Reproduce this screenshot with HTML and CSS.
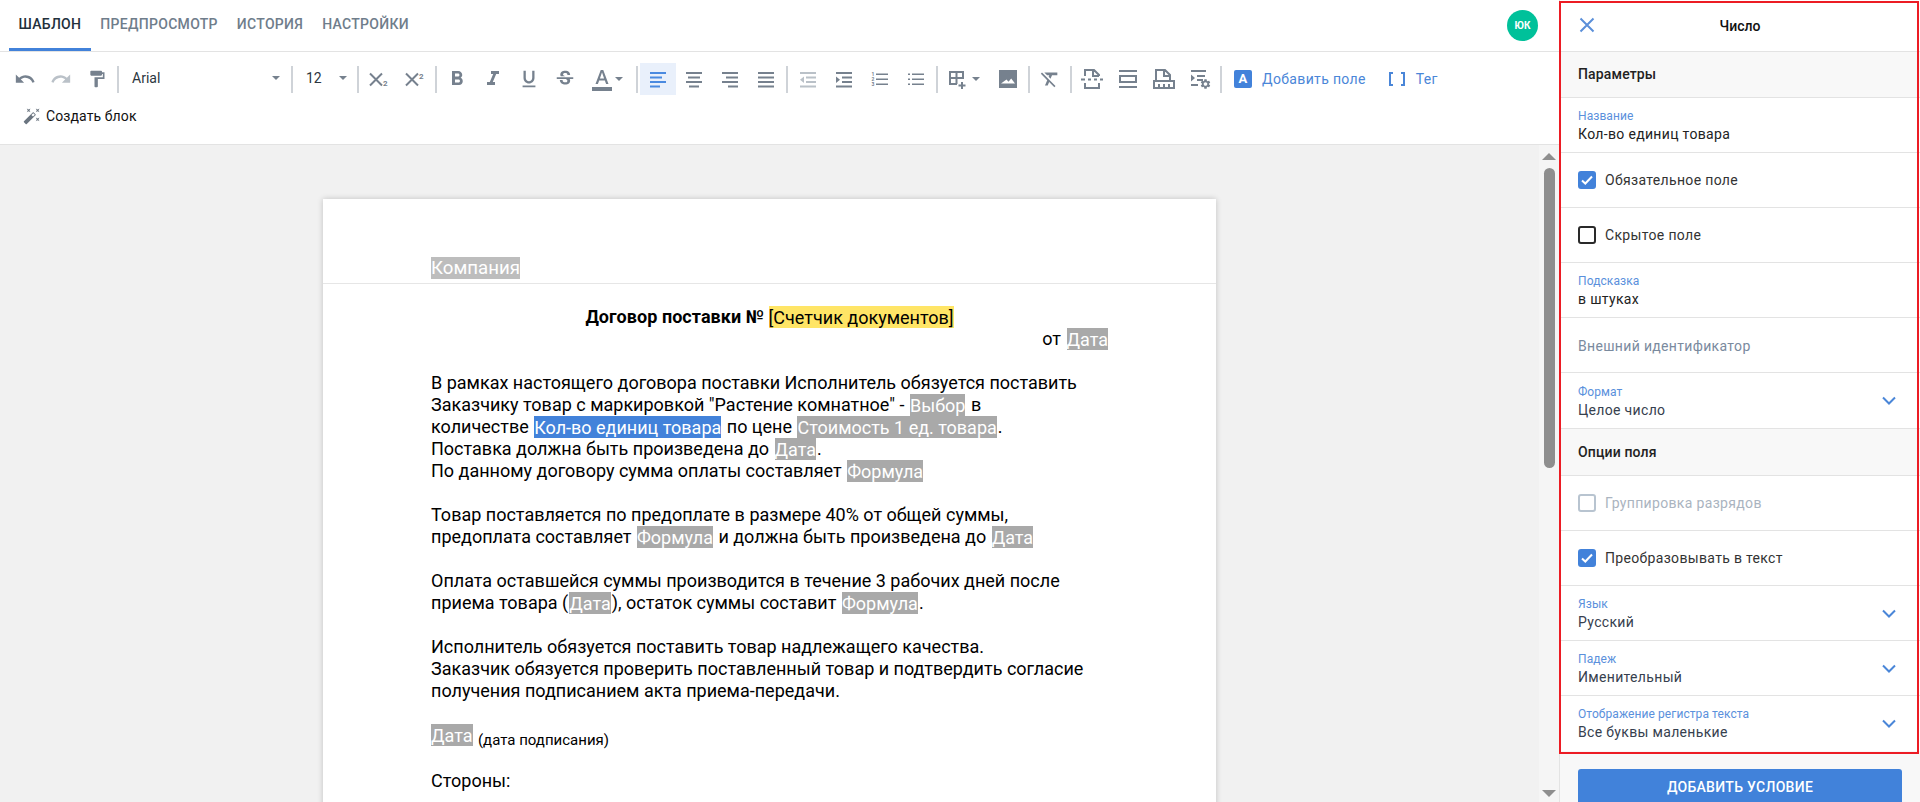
FILE: index.html
```html
<!DOCTYPE html>
<html lang="ru">
<head>
  <meta charset="UTF-8">
  <meta name="viewport" content="width=device-width, initial-scale=1.0">
  <title>Шаблон - Договор поставки</title>
  <link rel="stylesheet" href="styles.css">
</head>
<body>
  <div class="app">
    <div class="main">
      <!-- Tabs -->
      <div class="topbar">
        <div class="tabs">
          <a class="tab active">Шаблон</a>
          <a class="tab">Предпросмотр</a>
          <a class="tab">История</a>
          <a class="tab">Настройки</a>
        </div>
        <div class="avatar">ЮК</div>
      </div>

      <!-- Toolbar -->
      <div class="toolbar">
        <div class="tb-row">
          <button class="tb-btn"><svg class="ic22" viewBox="0 0 24 24"><path d="M12.5 8c-2.65 0-5.05.99-6.9 2.6L2 7v9h9l-3.62-3.62c1.39-1.16 3.16-1.88 5.12-1.88 3.54 0 6.55 2.31 7.6 5.5l2.37-.78C21.08 11.03 17.15 8 12.5 8z"/></svg></button>
          <button class="tb-btn faded"><svg class="ic22" viewBox="0 0 24 24"><path d="M18.4 10.6C16.55 8.99 14.15 8 11.5 8c-4.65 0-8.58 3.03-9.96 7.22L3.9 16c1.05-3.19 4.05-5.5 7.6-5.5 1.95 0 3.73.72 5.12 1.88L13 16h9V7l-3.6 3.6z"/></svg></button>
          <button class="tb-btn"><svg class="ic20" viewBox="0 0 24 24"><path d="M18 4V3c0-.55-.45-1-1-1H5c-.55 0-1 .45-1 1v4c0 .55.45 1 1 1h12c.55 0 1-.45 1-1V6h1v4H9v11c0 .55.45 1 1 1h2c.55 0 1-.45 1-1v-9h8V4h-3z"/></svg></button>
          <span class="tb-sep"></span>
          <div class="tb-select font-select"><span>Arial</span><i class="caret"></i></div>
          <span class="tb-sep"></span>
          <div class="tb-select size-select"><span>12</span><i class="caret"></i></div>
          <span class="tb-sep"></span>
          <button class="tb-btn"><svg class="ic24" viewBox="0 0 24 24"><path class="st2" d="M3 6.500l12 12M15 6.500l-12 12"/><text class="mini" x="16" y="18.500">2</text></svg></button>
          <button class="tb-btn"><svg class="ic24" viewBox="0 0 24 24"><path class="st2" d="M3 6.500l12 12M15 6.500l-12 12"/><text class="mini" x="16" y="12">2</text></svg></button>
          <span class="tb-sep"></span>
          <button class="tb-btn"><svg class="ic24" viewBox="0 0 24 24"><path d="M15.6 10.79c.97-.67 1.65-1.77 1.65-2.79 0-2.26-1.75-4-4-4H7v14h7.04c2.09 0 3.71-1.7 3.71-3.79 0-1.52-.86-2.82-2.15-3.42zM10 6.5h3c.83 0 1.5.67 1.5 1.5s-.67 1.5-1.5 1.5h-3v-3zm3.5 9H10v-3h3.5c.83 0 1.5.67 1.5 1.5s-.67 1.5-1.5 1.5z"/></svg></button>
          <button class="tb-btn"><svg class="ic24" viewBox="0 0 24 24"><path d="M10 4v3h2.21l-3.42 8H6v3h8v-3h-2.21l3.42-8H18V4z"/></svg></button>
          <button class="tb-btn"><svg class="ic22" viewBox="0 0 24 24"><path d="M12 17c3.31 0 6-2.69 6-6V3h-2.5v8c0 1.93-1.57 3.5-3.5 3.5S8.5 12.93 8.5 11V3H6v8c0 3.31 2.69 6 6 6zm-7 2v2h14v-2H5z"/></svg></button>
          <button class="tb-btn"><svg class="ic22" viewBox="0 0 24 24"><path d="M7.24 8.75c-.26-.48-.39-1.03-.39-1.67 0-.61.13-1.16.4-1.67.26-.5.63-.93 1.11-1.29.48-.35 1.05-.63 1.7-.83.66-.19 1.39-.29 2.18-.29.81 0 1.54.11 2.21.34.66.22 1.23.54 1.69.94.47.4.83.88 1.08 1.43.25.55.38 1.15.38 1.81h-3.01c0-.31-.05-.59-.15-.85-.09-.27-.24-.49-.44-.68-.2-.19-.45-.33-.75-.44-.3-.1-.66-.16-1.06-.16-.39 0-.74.04-1.03.13-.29.09-.53.21-.72.36-.19.16-.34.34-.44.55-.1.21-.15.43-.15.66 0 .48.25.88.74 1.21.38.25.77.48 1.41.7H7.39c-.05-.08-.11-.17-.15-.25zM21 12v-2H3v2h9.62c.18.07.4.14.55.2.37.17.66.34.87.51.21.17.35.36.43.57.07.2.11.43.11.69 0 .23-.05.45-.14.66-.09.2-.23.38-.42.53-.19.15-.42.26-.71.35-.29.08-.63.13-1.01.13-.43 0-.83-.04-1.18-.13s-.66-.23-.91-.42c-.25-.19-.45-.44-.59-.75-.14-.31-.25-.76-.25-1.21H6.4c0 .55.08 1.13.24 1.58.16.45.37.85.65 1.21.28.35.6.66.98.92.37.26.78.48 1.22.65.44.17.9.3 1.38.39.48.08.96.13 1.44.13.8 0 1.53-.09 2.18-.28s1.21-.45 1.67-.79c.46-.34.82-.77 1.07-1.27s.38-1.07.38-1.71c0-.6-.1-1.14-.31-1.61-.05-.11-.11-.23-.17-.33H21z"/></svg></button>
          <button class="tb-btn color-btn"><svg class="ic24" viewBox="0 0 24 24"><path d="M2 20h20v4H2v-4zm3.49-3h2.42l1.27-3.58h5.65L16.09 17h2.42L13.25 3h-2.5L5.49 17zm4.42-5.61 2.03-5.79h.12l2.03 5.79H9.91z"/></svg><i class="caret"></i></button>
          <span class="tb-sep"></span>
          <button class="tb-btn selected"><svg class="ic20" viewBox="0 0 20 20"><path d="M2 3h16v2H2zM2 7.5h12v2H2zM2 12h16v2H2zM2 16.5h10v2H2z"/></svg></button>
          <button class="tb-btn"><svg class="ic20" viewBox="0 0 20 20"><path d="M2 3h16v2H2zM4 7.5h12v2H4zM2 12h16v2H2zM5 16.5h10v2H5z"/></svg></button>
          <button class="tb-btn"><svg class="ic20" viewBox="0 0 20 20"><path d="M2 3h16v2H2zM6 7.5h12v2H6zM2 12h16v2H2zM8 16.5h10v2H8z"/></svg></button>
          <button class="tb-btn"><svg class="ic20" viewBox="0 0 20 20"><path d="M2 3h16v2H2zM2 7.5h16v2H2zM2 12h16v2H2zM2 16.5h16v2H2z"/></svg></button>
          <span class="tb-sep"></span>
          <button class="tb-btn faded"><svg class="ic20" viewBox="0 0 20 20"><path d="M2 3h16v2H2zM8 7.5h10v2H8zM8 12h10v2H8zM2 16.5h16v2H2zM6 7.5v6.5L2 10.8z"/></svg></button>
          <button class="tb-btn"><svg class="ic20" viewBox="0 0 20 20"><path d="M2 3h16v2H2zM8 7.5h10v2H8zM8 12h10v2H8zM2 16.5h16v2H2zM2 7.5v6.5l4-3.2z"/></svg></button>
          <button class="tb-btn"><svg class="ic20" viewBox="0 0 20 20"><path d="M6 4.5h12v1.600H6zM6 9.500h12v1.600H6zM6 14.500h12v1.600H6z"/><text class="tiny" x="1.600" y="7.200">1</text><text class="tiny" x="1.600" y="12.200">2</text><text class="tiny" x="1.600" y="17.200">3</text></svg></button>
          <button class="tb-btn"><svg class="ic20" viewBox="0 0 20 20"><path d="M6 4.500h12v1.600H6zM6 9.500h12v1.600H6zM6 14.500h12v1.600H6zM2 4.500h2v1.600H2zM2 9.500h2v1.600H2zM2 14.500h2v1.600H2z"/></svg></button>
          <span class="tb-sep"></span>
          <button class="tb-btn table-btn"><svg class="ic24" viewBox="0 0 24 24"><path class="st2" d="M4 5h13v6H4zM4 11v6h7M10.500 5v12"/><path d="M15 15h2v2.500h2.500v2H17V22h-2v-2.500h-2.500v-2H15z"/></svg><i class="caret"></i></button>
          <button class="tb-btn"><svg class="ic24" viewBox="0 0 24 24"><path fill-rule="evenodd" d="M3 3h18v18H3zM5 16.500h14l-3.800-5-2.700 3.300-2-2.300z"/></svg></button>
          <span class="tb-sep"></span>
          <button class="tb-btn"><svg class="ic22" viewBox="0 0 24 24"><path d="M3.270 5L2 6.270l6.970 6.970L6.500 19h3l1.570-3.660L16.730 21 18 19.730 3.550 5.270 3.270 5zM6 5v.180L8.820 8h2.400l-.720 1.680 2.100 2.100L14.210 8H20V5H6z"/></svg></button>
          <span class="tb-sep"></span>
          <button class="tb-btn"><svg class="ic24" viewBox="0 0 24 24"><path class="st2" d="M5 9V3h9l5 5v1M13 3v6h6M5 16v5h14v-5M1 12.500h4M8 12.500h3M14 12.500h3M20 12.500h3"/></svg></button>
          <button class="tb-btn"><svg class="ic24" viewBox="0 0 24 24"><path class="st2" d="M3 4h18M3 20h18M4 9h16v6H4z"/></svg></button>
          <button class="tb-btn"><svg class="ic24" viewBox="0 0 24 24"><path class="st2" d="M4 13V3h9l5 5v5M12 3v6h6M2 14h20v7H2zM7 17v4M12 17v4M17 17v4"/></svg></button>
          <button class="tb-btn"><svg class="ic24" viewBox="0 0 24 24"><path d="M3 3h15v2H3zM9 8h8v2H9zM9 12h6v2H9zM3 17h7v2H3zM3 7.500v7l4-3.500z"/><path transform="translate(11.500 11) scale(.5)" d="M19.140 12.940c.040-.300.060-.610.060-.940 0-.320-.020-.640-.070-.940l2.030-1.580c.180-.140.230-.410.120-.610l-1.920-3.320c-.120-.220-.370-.290-.590-.220l-2.390.960c-.500-.380-1.030-.700-1.620-.940l-.360-2.540c-.040-.240-.240-.410-.480-.410h-3.840c-.240 0-.430.170-.470.410l-.360 2.540c-.590.240-1.130.570-1.620.940l-2.390-.960c-.220-.080-.470 0-.590.220L2.740 8.870c-.120.210-.080.470.120.610l2.030 1.580c-.050.300-.090.630-.090.940s.020.640.070.940l-2.030 1.580c-.180.140-.230.410-.120.610l1.920 3.320c.120.220.370.290.590.220l2.390-.960c.500.380 1.030.700 1.620.940l.360 2.540c.050.240.240.410.480.410h3.840c.240 0 .440-.170.470-.410l.360-2.540c.590-.240 1.130-.560 1.620-.940l2.390.960c.220.080.470 0 .590-.220l1.920-3.320c.120-.220.070-.470-.120-.610l-2.010-1.580zM12 15.600c-1.980 0-3.600-1.620-3.600-3.600s1.620-3.600 3.600-3.600 3.600 1.620 3.600 3.600-1.620 3.600-3.600 3.600z"/></svg></button>
          <span class="tb-sep"></span>
          <div class="tb-link add-field"><span class="field-badge">A</span>Добавить поле</div>
          <div class="tb-link add-tag"><span class="brackets"><i></i><i></i></span>Тег</div>
        </div>
        <div class="tb-row">
          <div class="create-block">
            <svg class="wand" viewBox="0 0 24 24"><path d="M7.500 5.600 10 7 8.600 4.500 10 2 7.500 3.400 5 2l1.400 2.500L5 7zm12 9.800L17 14l1.400 2.500L17 19l2.500-1.400L22 19l-1.400-2.500L22 14zM22 2l-2.500 1.400L17 2l1.400 2.500L17 7l2.500-1.400L22 7l-1.400-2.500zm-7.630 5.290c-.390-.390-1.020-.390-1.410 0L1.290 18.960c-.390.390-.390 1.020 0 1.410l2.340 2.340c.390.390 1.020.390 1.410 0L16.700 11.050c.390-.390.390-1.020 0-1.410l-2.330-2.350zm-1.030 5.490-2.120-2.120 2.440-2.440 2.120 2.120-2.440 2.440z"/></svg>
            Создать блок
          </div>
        </div>
      </div>

      <!-- Document -->
      <div class="editor">
        <div class="doc-scroll">
          <div class="page">
            <div class="page-header"><span class="tag tag-light">Компания</span></div>
            <div class="page-body">
              <p class="doc-title"><b>Договор поставки №</b> <span class="tag-counter">[Счетчик документов]</span></p>
              <p class="doc-date">от <span class="tag tag-end">Дата</span></p>
              <p class="gap">В рамках настоящего договора поставки Исполнитель обязуется поставить<br>
                Заказчику товар с маркировкой "Растение комнатное" - <span class="tag">Выбор</span> в<br>
                количестве <span class="tag tag-active">Кол-во единиц товара</span> по цене <span class="tag">Стоимость 1 ед. товара</span>.<br>
                Поставка должна быть произведена до <span class="tag">Дата</span>.<br>
                По данному договору сумма оплаты составляет <span class="tag">Формула</span></p>
              <p class="gap">Товар поставляется по предоплате в размере 40% от общей суммы,<br>
                предоплата составляет <span class="tag">Формула</span> и должна быть произведена до <span class="tag">Дата</span></p>
              <p class="gap">Оплата оставшейся суммы производится в течение 3 рабочих дней после<br>
                приема товара (<span class="tag">Дата</span>), остаток суммы составит <span class="tag">Формула</span>.</p>
              <p class="gap">Исполнитель обязуется поставить товар надлежащего качества.<br>
                Заказчик обязуется проверить поставленный товар и подтвердить согласие<br>
                получения подписанием акта приема-передачи.</p>
              <p class="gap"><span class="tag tag-start">Дата</span> <small>(дата подписания)</small></p>
              <p class="gap">Стороны:</p>
            </div>
          </div>
        </div>
        <div class="scrollbar">
          <i class="arrow-up"></i>
          <div class="thumb"></div>
          <i class="arrow-down"></i>
        </div>
      </div>
    </div>

    <!-- Field settings -->
    <aside class="panel">
      <div class="panel-head">
        <svg class="close" viewBox="0 0 16 16"><path d="M1.500 1.500l13 13M14.500 1.500l-13 13"/></svg>
        <span>Число</span>
      </div>

      <div class="section-title">Параметры</div>
      <div class="row field">
        <label>Название</label>
        <div class="value">Кол-во единиц товара</div>
      </div>
      <div class="row check">
        <span class="box checked"><svg viewBox="0 0 18 18"><path d="M4 9.500l3.300 3L14 5.500"/></svg></span>
        <span>Обязательное поле</span>
      </div>
      <div class="row check">
        <span class="box"></span>
        <span>Скрытое поле</span>
      </div>
      <div class="row field">
        <label>Подсказка</label>
        <div class="value">в штуках</div>
      </div>
      <div class="row field">
        <div class="placeholder">Внешний идентификатор</div>
      </div>
      <div class="row field select">
        <label>Формат</label>
        <div class="value">Целое число</div>
        <svg class="chevron" viewBox="0 0 14 9"><path d="M1 1.500l6 6 6-6"/></svg>
      </div>

      <div class="section-title">Опции поля</div>
      <div class="row check disabled">
        <span class="box"></span>
        <span>Группировка разрядов</span>
      </div>
      <div class="row check">
        <span class="box checked"><svg viewBox="0 0 18 18"><path d="M4 9.500l3.300 3L14 5.500"/></svg></span>
        <span>Преобразовывать в текст</span>
      </div>
      <div class="row field select">
        <label>Язык</label>
        <div class="value">Русский</div>
        <svg class="chevron" viewBox="0 0 14 9"><path d="M1 1.500l6 6 6-6"/></svg>
      </div>
      <div class="row field select">
        <label>Падеж</label>
        <div class="value">Именительный</div>
        <svg class="chevron" viewBox="0 0 14 9"><path d="M1 1.500l6 6 6-6"/></svg>
      </div>
      <div class="row field select last">
        <label>Отображение регистра текста</label>
        <div class="value">Все буквы маленькие</div>
        <svg class="chevron" viewBox="0 0 14 9"><path d="M1 1.500l6 6 6-6"/></svg>
      </div>

      <div class="panel-footer">
        <button class="btn-primary">Добавить условие</button>
      </div>

      <div class="red-frame"></div>
    </aside>
  </div>
</body>
</html>
```

FILE: styles.css
```css
* {
  margin: 0;
  padding: 0;
  box-sizing: border-box;
}

html,
body {
  height: 802px;
  overflow: hidden;
}

body {
  font-family: Roboto, sans-serif;
  font-size: 14px;
  color: #222;
  background: white;
}

button {
  font-family: inherit;
  border: none;
  background: none;
}

.app {
  display: flex;
  height: 802px;
}

.main {
  width: 1559px;
  display: flex;
  flex-direction: column;
}

/* Tabs */

.topbar {
  height: 52px;
  flex: none;
  display: flex;
  align-items: center;
  justify-content: space-between;
  padding: 0 21px 0 9px;
  border-bottom: 1px solid #e3e3e3;
}

.tabs {
  display: flex;
  height: 51px;
}

.tab {
  display: flex;
  align-items: center;
  padding: 0 9.5px;
  font-size: 14px;
  font-weight: 500;
  letter-spacing: 0.3px;
  text-transform: uppercase;
  color: #6f7d8b;
  border-bottom: 3px solid transparent;
}

.tab.active {
  color: #22303c;
  border-bottom-color: #4282da;
}

.avatar {
  width: 31px;
  height: 31px;
  border-radius: 50%;
  background: #00c19a;
  color: white;
  font-size: 10px;
  font-weight: 700;
  display: flex;
  align-items: center;
  justify-content: center;
}

/* Toolbar */

.toolbar {
  height: 93px;
  flex: none;
  padding: 9px 0 0 7px;
  border-bottom: 1px solid #e3e3e3;
}

.tb-row {
  display: flex;
  align-items: center;
  height: 36px;
  margin-bottom: 1px;
}

.tb-btn {
  width: 36px;
  height: 32px;
  flex: none;
  display: flex;
  align-items: center;
  justify-content: center;
  fill: #76818e;
  color: #76818e;
}

.tb-btn.faded {
  fill: #bac1c8;
  color: #bac1c8;
}

.tb-btn.selected {
  fill: #4a8ae0;
  background: #e9f0fb;
}

.color-btn {
  width: 51px;
  padding-right: 13px;
  position: relative;
}

.color-btn .caret {
  position: absolute;
  right: 11px;
  top: 14px;
}

.table-btn {
  width: 50px;
  padding-right: 14px;
  position: relative;
}

.table-btn .caret {
  position: absolute;
  right: 10px;
  top: 14px;
}

.ic20 {
  width: 20px;
  height: 20px;
}

.ic22 {
  width: 22px;
  height: 22px;
}

.ic24 {
  width: 24px;
  height: 24px;
}

.st2 {
  fill: none;
  stroke: #76818e;
  stroke-width: 2;
}

.mini {
  font-size: 8px;
  font-weight: 700;
  fill: #76818e;
}

.tiny {
  font-size: 5px;
  font-weight: 700;
  fill: #76818e;
}

.tb-sep {
  width: 2px;
  height: 27px;
  margin: 0 2px;
  background: #cfd3d8;
  flex: none;
}

.tb-select {
  display: flex;
  align-items: center;
  justify-content: space-between;
  height: 32px;
  padding-bottom: 2px;
  font-size: 14px;
  color: #2c3640;
}

.font-select {
  width: 168px;
  padding-left: 11px;
  padding-right: 9px;
}

.size-select {
  width: 60px;
  padding-left: 11px;
  padding-right: 8px;
}

.caret {
  display: block;
  width: 0;
  height: 0;
  border-left: 4px solid transparent;
  border-right: 4px solid transparent;
  border-top: 4px solid #76818e;
}

.tb-link {
  display: flex;
  align-items: center;
  color: #4a86d8;
  font-size: 14px;
  letter-spacing: 0.35px;
}

.add-field {
  margin-left: 10px;
}

.field-badge {
  width: 18px;
  height: 18px;
  margin-right: 10px;
  border-radius: 2px;
  background: #4282da;
  color: white;
  font-size: 13px;
  font-weight: 700;
  text-align: center;
  line-height: 18px;
}

.add-tag {
  margin-left: 23px;
}

.brackets {
  display: flex;
  justify-content: space-between;
  width: 16px;
  margin-right: 11px;
}

.brackets i {
  width: 4px;
  height: 14px;
  border: 2px solid #4a86d8;
  border-right: none;
}

.brackets i:last-child {
  border-right: 2px solid #4a86d8;
  border-left: none;
}

.create-block {
  display: flex;
  align-items: center;
  gap: 5px;
  margin-left: 16px;
  font-size: 14px;
  letter-spacing: 0.1px;
  color: #111;
}

.wand {
  width: 18px;
  height: 18px;
  fill: #6b7580;
}

/* Document */

.editor {
  flex: 1;
  display: flex;
  min-height: 0;
  background: #f1f1f1;
}

.doc-scroll {
  flex: 1;
  overflow: hidden;
}

.page {
  width: 893px;
  margin: 54px auto 0;
  background: white;
  box-shadow: 0 0 6px rgba(0, 0, 0, 0.2);
  font-size: 18px;
  line-height: 22px;
  color: #000;
}

.page-header {
  height: 85px;
  padding: 58px 108px 0;
  border-bottom: 1px solid #e6e6e6;
  font-size: 18.67px;
}

.page-body {
  padding: 22px 108px 60px;
}

.gap {
  margin-top: 22px;
}

.doc-title {
  text-align: center;
}

.doc-title b {
  font-weight: 700;
  letter-spacing: 0.06px;
}

.doc-date {
  text-align: right;
}

.tag {
  margin: 0 1px;
  padding: 0.5px 0;
  background: #a9a9a9;
  color: white;
}

.tag-light {
  margin: 0;
  padding: 0;
  background: #bdbdbd;
}

.tag-active {
  background: #4282da;
}

.tag-start {
  margin-left: 0;
}

.tag-end {
  margin-right: 0;
}

.tag-counter {
  padding: 0.5px 0;
  background: #ffe566;
}

small {
  font-size: 15px;
  line-height: 1;
  vertical-align: -4px;
}

.scrollbar {
  width: 20px;
  flex: none;
  position: relative;
  background: #f5f5f5;
  display: flex;
  flex-direction: column;
  align-items: center;
  padding: 8px 0 5px;
}

.thumb {
  width: 11px;
  height: 300px;
  margin-top: 8px;
  border-radius: 6px;
  background: #8e8e8e;
}

.arrow-up,
.arrow-down {
  display: block;
  width: 0;
  height: 0;
  border-left: 7px solid transparent;
  border-right: 7px solid transparent;
}

.arrow-up {
  border-bottom: 7px solid #8e8e8e;
}

.arrow-down {
  margin-top: auto;
  border-top: 7px solid #8e8e8e;
}

/* Field settings */

.panel {
  width: 361px;
  position: relative;
  display: flex;
  flex-direction: column;
  border-left: 1px solid #e3e3e3;
  background: #f8f8f8;
}

.panel-head {
  height: 52px;
  flex: none;
  position: relative;
  display: flex;
  align-items: center;
  justify-content: center;
  background: white;
  border-bottom: 1px solid #e3e3e3;
  font-weight: 500;
  color: #111;
}

.close {
  position: absolute;
  left: 19px;
  top: 17px;
  width: 16px;
  height: 16px;
  fill: none;
  stroke: #5b8fd9;
  stroke-width: 2;
}

.section-title {
  height: 46px;
  flex: none;
  display: flex;
  align-items: center;
  padding: 0 18px 2px;
  background: #f8f8f8;
  border-bottom: 1px solid #e3e3e3;
  font-weight: 500;
  letter-spacing: 0.15px;
  color: #222;
}

.row + .section-title {
  height: 47px;
  padding-bottom: 0;
}

.row {
  height: 55.1px;
  flex: none;
  padding: 0 18px;
  position: relative;
  background: white;
  border-bottom: 1px solid #e3e3e3;
  letter-spacing: 0.33px;
}

.row.last {
  border-bottom: none;
}

.field {
  display: flex;
  flex-direction: column;
  justify-content: center;
  padding-top: 2px;
}

.field label {
  font-size: 12px;
  line-height: 16px;
  letter-spacing: 0.08px;
  color: #5a90dc;
}

.value {
  font-size: 14px;
  line-height: 20px;
  color: #222;
}

.select .value {
  color: #36404e;
}

.placeholder {
  color: #7a8a9e;
}

.chevron {
  position: absolute;
  right: 24px;
  top: 23px;
  width: 14px;
  height: 9px;
  fill: none;
  stroke: #4a86d8;
  stroke-width: 2;
}

.check {
  display: flex;
  align-items: center;
  gap: 9px;
  color: #333;
}

.box {
  width: 18px;
  height: 18px;
  border: 2px solid #2a2a2a;
  border-radius: 3px;
  background: white;
  flex: none;
}

.box.checked {
  background: #4282da;
  border-color: #4282da;
}

.box svg {
  display: block;
  width: 18px;
  height: 18px;
  margin: -2px;
  fill: none;
  stroke: white;
  stroke-width: 2;
}

.check.disabled {
  color: #aab4c0;
}

.check.disabled .box {
  border-color: #b8c4d0;
}

.panel-footer {
  padding: 18px 18px 0;
}

.btn-primary {
  width: 324px;
  height: 36px;
  border-radius: 3px;
  background: #4182da;
  color: white;
  font-size: 14px;
  font-weight: 500;
  letter-spacing: 0.3px;
  text-transform: uppercase;
}

.red-frame {
  position: absolute;
  left: -1px;
  top: 1px;
  width: 360px;
  height: 753px;
  border: 2px solid #ec1c24;
  pointer-events: none;
}
```
